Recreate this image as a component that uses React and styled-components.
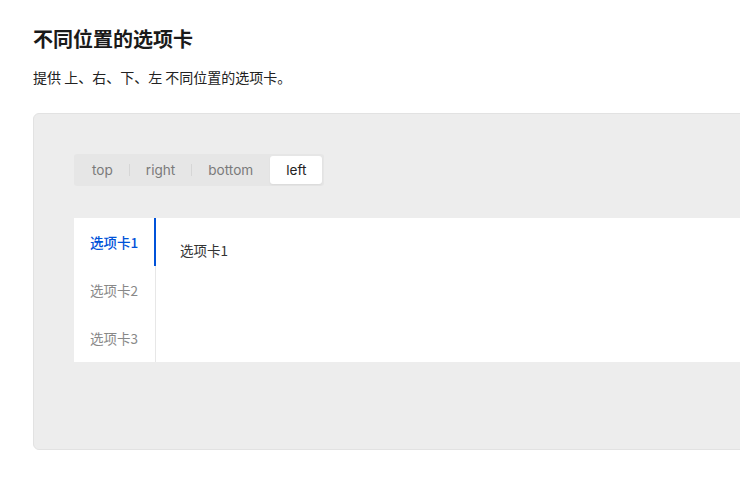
import React, { useState } from "react";
import styled, { createGlobalStyle } from "styled-components";

const Global = createGlobalStyle`
  html, body { margin: 0; padding: 0; background: #fff; overflow: hidden; }
  body { font-family: Inter, "Noto Sans CJK SC", sans-serif; }
`;

const Page = styled.div`
  box-sizing: border-box;
  width: 100%;
  overflow: hidden;
  padding: 25px 0 0 33px;
`;

const Title = styled.h1`
  margin: 0;
  font-size: 20px;
  line-height: 28px;
  font-weight: 700;
  color: #1a1a1a;
  font-family: "Noto Sans CJK SC", sans-serif;
`;

const Desc = styled.p`
  margin: 13px 0 0;
  font-size: 14px;
  line-height: 22px;
  color: #222;
  font-family: "Noto Sans CJK SC", sans-serif;
`;

const DemoBox = styled.div`
  width: 860px;
  margin-top: 25px;
  background: #ededed;
  border: 1px solid #e2e2e2;
  border-radius: 6px;
  padding: 40px 0 87px 40px;
`;

const Segment = styled.div`
  display: inline-flex;
  align-items: center;
  background: #e6e6e6;
  border-radius: 3px;
  padding: 2px;
  height: 28px;
`;

const SegItem = styled.button`
  border: 0;
  height: 28px;
  padding: 0 16px;
  border-radius: 3px;
  font-family: Inter, sans-serif;
  font-size: 13.6px;
  cursor: pointer;
  background: ${(p) => (p.$active ? "#fff" : "transparent")};
  color: ${(p) => (p.$active ? "#222" : "#7a7a7a")};
  box-shadow: ${(p) => (p.$active ? "0 1px 2px rgba(0,0,0,0.06)" : "none")};
`;

const SegDivider = styled.span`
  width: 1px;
  height: 12px;
  background: ${(p) => (p.$hidden ? "transparent" : "#d6d6d6")};
`;

const Tabs = styled.div`
  margin-top: 32px;
  display: flex;
  background: #fff;
  height: 144px;
`;

const TabNav = styled.div`
  position: relative;
  width: 81px;
  border-right: 1px solid #e7e7e7;
  display: flex;
  flex-direction: column;
`;

const TabItem = styled.div`
  height: 48px;
  display: flex;
  align-items: center;
  padding-left: 16px;
  font-size: 13.5px;
  font-family: "Noto Sans CJK SC", sans-serif;
  font-weight: ${(p) => (p.$active ? 500 : 400)};
  color: ${(p) => (p.$active ? "#0052d9" : "#888")};
  cursor: pointer;
`;

const Indicator = styled.span`
  position: absolute;
  right: -1px;
  width: 2px;
  height: 48px;
  background: #0052d9;
`;

const Panel = styled.div`
  flex: 1;
  padding: 21px 24px;
  font-size: 13.5px;
  line-height: 22px;
  color: #333;
  font-family: "Noto Sans CJK SC", sans-serif;
`;

const positions = ["top", "right", "bottom", "left"];
const tabs = ["选项卡1", "选项卡2", "选项卡3"];

export default function App() {
  const [pos, setPos] = useState("left");
  const [tab, setTab] = useState(0);
  const activeIdx = positions.indexOf(pos);
  return (
    <Page>
      <Global />
      <Title>不同位置的选项卡</Title>
      <Desc>提供 上、右、下、左 不同位置的选项卡。</Desc>
      <DemoBox>
        <Segment>
          {positions.map((p, i) => (
            <React.Fragment key={p}>
              {i > 0 && (
                <SegDivider $hidden={i === activeIdx || i - 1 === activeIdx} />
              )}
              <SegItem $active={p === pos} onClick={() => setPos(p)}>
                {p}
              </SegItem>
            </React.Fragment>
          ))}
        </Segment>
        <Tabs>
          <TabNav>
            {tabs.map((t, i) => (
              <TabItem key={t} $active={i === tab} onClick={() => setTab(i)}>
                {t}
              </TabItem>
            ))}
            <Indicator style={{ top: tab * 48 }} />
          </TabNav>
          <Panel>{tabs[tab]}</Panel>
        </Tabs>
      </DemoBox>
    </Page>
  );
}
